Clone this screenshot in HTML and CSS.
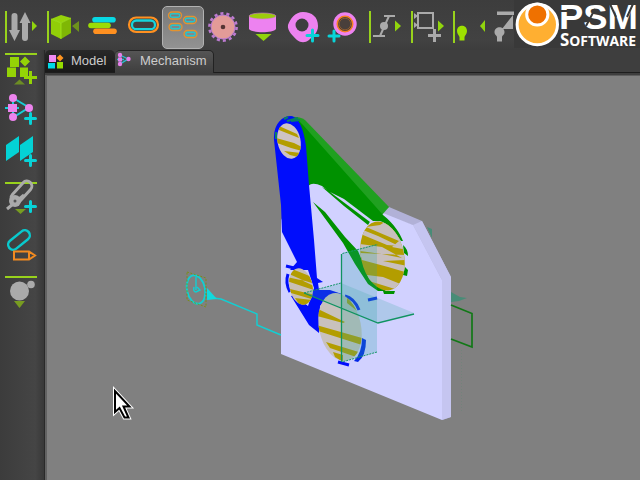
FILE: index.html
```html
<!DOCTYPE html>
<html lang="en">
<head>
<meta charset="utf-8">
<title>Mechanism</title>
<link rel="stylesheet" href="styles.css">
</head>
<body>
<div class="app">
  <header class="toolbar">
    <svg class="tool" width="43" height="48" viewBox="0 0 43 48"><path class="bar" d="M6 11v32"/><g class="grey-line"><path d="M14.500 16v16M25 21v17"/></g><path fill="#aaa" d="M9 30h11l-5.500 11zM19.500 23h11L25 12z"/><path class="lime" d="M32 21l5 5-5 5z"/></svg>
    <svg class="tool" width="41" height="48" viewBox="43 0 41 48"><path class="bar" d="M48 11v32"/><path fill="#96d30b" d="M51 19l10-4 10 3-10 5z"/><path fill="#91ce08" d="M51 19l10 4v16l-10-5z"/><path fill="#7fb705" d="M61 23l10-5v15l-10 6z"/><path fill="none" stroke="#a8ef20" stroke-width=".7" d="M51 19l10 4 10-5M61 23v16"/><path fill="#6d921c" d="M79 21v11l-7-6z"/></svg>
    <svg class="tool" width="40" height="48" viewBox="84 0 40 48"><g stroke-width="5.600" stroke-linecap="round"><path stroke="#08d9e4" d="M95 19.700h18"/><path stroke="#9bdc05" d="M91 25.500h17"/><path stroke="#ff9020" d="M96 31.200h18"/></g></svg>
    <svg class="tool" width="38" height="48" viewBox="124 0 38 48"><g fill="none"><rect x="129" y="17.500" width="29" height="14.500" rx="7.200" stroke="#ff9020" stroke-width="2.200"/><rect x="132" y="20.500" width="23" height="8.700" rx="4.300" stroke="#16d4dc" stroke-width="2.300"/></g></svg>
    <div class="pressed"><svg width="40" height="41" viewBox="163 7 40 41"><defs><g id="pill" fill="none"><rect x=".5" y=".5" width="13" height="7" rx="3.500" stroke="#e3922f" stroke-width="1.300"/><rect x="2.300" y="2.300" width="9.400" height="3.400" rx="1.700" stroke="#28c5cb" stroke-width="1.400"/></g></defs><use href="#pill" x="168" y="11.500"/><use href="#pill" x="183" y="16"/><use href="#pill" x="168.500" y="23"/><use href="#pill" x="183.500" y="30"/></svg></div>
    <svg class="tool" width="40" height="48" viewBox="204 0 40 48"><circle cx="223" cy="27" r="13.600" fill="none" stroke="#bd7bd2" stroke-width="2.600" stroke-dasharray="3.100 3"/><circle cx="223" cy="27" r="12" fill="#e39b98" stroke="#bd7bd2"/><circle cx="223" cy="27" r="2.300" fill="#553434"/></svg>
    <svg class="tool" width="40" height="48" viewBox="244 0 40 48"><path fill="#ed82f0" d="M249 16v13c3 4.300 24 4.300 27 0V16z"/><ellipse cx="262.500" cy="16" rx="13.500" ry="3" fill="#9bcb0b" stroke="#d27ad8" stroke-width=".6"/><path class="lime" d="M255.500 34h16l-8 7z"/></svg>
    <svg class="tool" width="41" height="48" viewBox="284 0 41 48"><path fill="#ed82f0" d="M288 25c2-6 7-13 15-13 9 0 15 5 15 14 0 7-5 10-9 14-4 3-8 3-12 0-4-4-10-9-9-15z"/><circle cx="302" cy="25" r="6.500" fill="#3e3e3e"/><path class="plus" d="M307 35.500h11M312.500 30v11"/></svg>
    <svg class="tool" width="39" height="48" viewBox="325 0 39 48"><circle cx="345" cy="24" r="11.700" fill="#ed82f0"/><circle cx="345" cy="24" r="7.700" fill="#493f3b" stroke="#f58020" stroke-width="1.600"/><circle cx="345" cy="24" r="5.800" fill="none" stroke="#9b602c" stroke-width=".8"/><path class="plus" d="M329 36h10M334 31v10"/></svg>
    <svg class="tool" width="43" height="48" viewBox="364 0 43 48"><path class="bar" d="M370 11v32"/><path fill="none" stroke="#aaa" stroke-width="2" d="M384 16h11M389 16l-9 20M373 36h12"/><circle cx="384" cy="26" r="4" fill="#aaa"/><path class="lime" d="M395 20.500l6 5.500-6 5.500z"/></svg>
    <svg class="tool" width="43" height="48" viewBox="407 0 43 48"><path class="bar" d="M412 11v32"/><path fill="none" stroke="#aaa" stroke-width="2" d="M418 13h15v15h-15z"/><path fill="#aaa" d="M414 13l4 3-4 3zM414 22l4 3-4 3z"/><path stroke="#aaa" stroke-width="3" d="M428 35.500h13M434.500 29v13"/><path class="lime" d="M438 20.500l6 5.500-6 5.500z"/></svg>
    <svg class="tool" width="35" height="48" viewBox="450 0 35 48"><path class="bar" d="M454 11v32"/><path fill="#9de000" d="M457 31c0-7 10-7 10 0 0 3-2 4-2.500 6v3.500h-5V37c-.5-2-2.500-3-2.500-6z"/><path class="lime" d="M485 20v12l-5-6z"/></svg>
    <svg class="tool" width="29" height="48" viewBox="485 0 29 48"><path fill="#aaa" d="M497 11.500h17V15h-17zM513 15v14h-11zM494.500 32c0-6.500 10-6.500 10 0 0 3-2 3-2.500 5v4.500h-5V37c-.5-2-2.500-2-2.500-5z"/></svg>
    <svg class="logo" width="126" height="48" viewBox="514 0 126 48"><circle cx="537.300" cy="24.500" r="20.200" fill="#ffaf31" stroke="#fff" stroke-width="3"/><circle cx="537.300" cy="14.500" r="10.600" fill="#ef7100" stroke="#fff" stroke-width="3"/><text class="brand" x="559" y="28.500" textLength="79" lengthAdjust="spacingAndGlyphs">PSM</text><path class="cuts" d="M559 11h9.500M595 9l-9 17M616 17l-6-13M627 17l6-13"/><text class="brand-sub" x="560" y="46" textLength="76" lengthAdjust="spacingAndGlyphs"><tspan class="initial">S</tspan>OFTWARE</text></svg>
  </header>
  <div class="body">
    <aside class="sidebar">
      <svg width="44" height="40" viewBox="0 50 44 40"><path class="bar" d="M5 54h32"/><path fill="#94d306" d="M10 57h9v10h-9zM25 56.500l5 5-5 5-5-5zM7 67.500h9V77H7zM20 67.500h8V77h-8z"/><path stroke="#94d306" stroke-width="3" d="M24 77.500h13M30.500 71v13"/><path fill="#6d8d24" d="M14 84.500l5.500-5 5.500 5z"/></svg>
      <svg width="44" height="40" viewBox="0 90 44 40"><path stroke="#16ced6" stroke-width="2" fill="none" d="M13 98l16 9.500-16 10zM5 108h14"/><g fill="#ec83ed"><circle cx="13" cy="98" r="4"/><circle cx="29" cy="108" r="4"/><circle cx="13" cy="117" r="4"/><path d="M8 104h9v8H8z"/></g><path class="plus" d="M25.500 118.500h10M30.500 113.500v10"/></svg>
      <svg width="44" height="45" viewBox="0 130 44 45"><path fill="#04d2d5" d="M6 145l13-9v16l-13 9zM20 145l13-9v16l-13 9z"/><path class="plus" d="M25.500 160.500h10M30.500 155.500v10"/></svg>
      <svg width="44" height="48" viewBox="0 175 44 48"><path class="bar" d="M5 183h32"/><g fill="none" stroke="#aaa"><rect x="8.500" y="187" width="26" height="10" rx="5" transform="rotate(-48 21.500 192)" stroke-width="3"/><path d="M7 209l17-14" stroke-width="3"/></g><circle cx="15" cy="201" r="6" fill="#aaa"/><circle cx="15" cy="201" r="1.500" fill="#555"/><path fill="#789c21" d="M15 209h11l-5.500 5z"/><path class="plus" d="M25.500 206.500h10M30.500 201.500v10"/></svg>
      <svg width="44" height="47" viewBox="0 223 44 47"><rect x="6.500" y="235" width="25" height="10" rx="5" transform="rotate(-39 19 240)" fill="none" stroke="#09c9cd" stroke-width="2.500"/><path fill="none" stroke="#f18a20" stroke-width="2" d="M14 251.500h15l6 4-6 4H14zM29 251v9"/></svg>
      <svg width="44" height="50" viewBox="0 270 44 50"><path class="bar" d="M5 277h32"/><circle cx="19.500" cy="291" r="9.500" fill="#aaa"/><circle cx="31" cy="284.500" r="3.800" fill="#aaa"/><path fill="#789c21" d="M14 301h11l-5.500 7z"/></svg>
    </aside>
    <main class="workspace">
      <nav class="tabs">
        <div class="tab tab-model"><svg width="22" height="22" viewBox="45 50 22 22"><path fill="#f08af2" d="M49 55h7v7h-7z"/><path fill="#ff9420" d="M60 54.500l3.500 3.500-3.500 3.500-3.500-3.500z"/><path fill="#00d9e8" d="M48 63h7v5.500h-7z"/><path fill="#96dc00" d="M57 62h6v6.500h-6z"/></svg><span>Model</span></div>
        <div class="tab tab-active"><svg width="20" height="22" viewBox="115 50 20 22"><path fill="none" stroke="#27bfd0" stroke-width="1.300" d="M120 55l8 4-8 5zM117 59.500h7"/><g fill="#e780eb"><circle cx="120" cy="55" r="2.200"/><circle cx="128.500" cy="59" r="2.200"/><circle cx="120" cy="64" r="2.200"/><path d="M118 57.500h4v4h-4z"/></g></svg><span>Mechanism</span></div>
      </nav>
      <section class="viewport">
        <svg width="593" height="404" viewBox="47 76 593 404">
          <defs>
            <clipPath id="pinTop"><ellipse cx="289" cy="141" rx="11.500" ry="18" transform="rotate(-12 289 141)"/></clipPath>
            <clipPath id="pinSmall"><ellipse cx="301" cy="286.500" rx="11.500" ry="18.500" transform="rotate(-12 301 286.500)"/></clipPath>
            <clipPath id="pinLarge"><ellipse cx="340" cy="327" rx="21" ry="34.500" transform="rotate(-12 340 327)"/></clipPath>
            <clipPath id="pinRight"><ellipse cx="382.500" cy="256" rx="21.500" ry="35" transform="rotate(-12 382.500 256)"/></clipPath>
          </defs>
          <!-- base plate -->
          <path fill="#b1b1d7" d="M380 213l9-6 33 14 29 56v140l-9 3-1-141-29-54z"/>
          <path fill="#c5c5f0" d="M413 225l9-4 29 56-9 3zM442 280l9-3v140l-9 3z"/>
          <path fill="#d1d1ff" d="M281 354V220l26-44 76 37 30 12 29 55v140z"/>
          <!-- green lever -->
          <path fill="#20a020" d="M289 117q10-1 16 3l84 87-7 8-85-89z"/>
          <path fill="#009100" d="M297 119l6 6 80 90c12 10 16 17 20 26h-2c-6-10-12-17-21-20h-8l-31-21q-10-6-19-14-11-5-14 1l-8-20z"/>
          <path fill="#009100" d="M322 187l8 4 41 29-3 5-24-19zM313 202L325 212L345 237L358 251L366 270L379 286L386 291L378 291L368 284L355 264L343 243zM383 291h12l-1 3h-10zM403 245q5 4 5 11l-4-3zM405 267l3 3-1 6-4-1z"/>
          <path fill="#d1d1ff" d="M330 192l14 7 29 22-3 1z"/>
          <!-- blue link -->
          <path fill="#000dfc" d="M274 140C273 124 282 116 291 116C299 117 304 130 306 146L309 185L314 240L317 278L323 282L318 283L319 290L330 290L342 294Q328 296 320 306L319 333L309 325L291 296L294 295L308 306L314 288L308 270L290 270L297 262L282 232L281 205z"/>
          <path fill="none" stroke="#000dfc" stroke-width="3" d="M288 274q-3 9 2 18M286 266l8 2M345 296q9 2 14 14M368 300l9-2M338 362l11 3"/>
          <path fill="#0528e8" d="M362 338l4 2q0 16-8 22l-4-1q8-8 8-23z"/>
          <path fill="none" stroke="#087f65" stroke-width="2" d="M284 119l4-2M291 121l9-1M287 121l11-3M276 132v7"/>
          <!-- pins -->
          <g clip-path="url(#pinTop)"><path fill="#cdc3c5" d="M270 115h40v50h-40z"/><path class="stripe" d="M279 126l18 8 2 4-20-8zM276 138l18 5 12 6v3l-15-4-14-5zM284 151l18 2v5l-12-3z"/></g>
          <g clip-path="url(#pinSmall)"><path fill="#c8bfb4" d="M285 265h35v45h-35z"/><path class="stripe" d="M287 267l25 10v6l-13-4 15 7v4l-27-9v-4l18 4-18-8zM290 289l25 6v5l-24-7zM295 298l17 2-3 7-10-3z"/></g>
          <g clip-path="url(#pinLarge)"><path fill="#c8c1bd" d="M315 290h50v75h-50z"/><path class="stripe" d="M318 309l27 13-2 1-26-7zM316 325l46 13v7l-47-15zM326 342l36 11v6l-32-11zM333 352l10 3v7l-8-5zM347 293l18 17v7l-18-14z"/></g>
          <g clip-path="url(#pinRight)"><path fill="#b39d00" d="M357 220h50v75h-50z"/><path fill="#c8bfbd" d="M388 220l19 9v21l-15-3 7-6-33-14 14-2zM363 230l15 6 21 10-12-1-24-10zM360 244l22 3 20 11-20-4-22-3zM362 260l26 7 20 6v-7l-25-5 22-1v-5l-45-2zM367 275l16 2 20 8-8 4-26-8z"/></g>
          <!-- reference planes -->
          <path fill="#26a5a5" fill-opacity=".24" d="M342 253l35-9v108l-35 10z"/>
          <path fill="#35a99f" fill-opacity=".22" d="M304 293l37-10 73 30-36 10z"/>
          <path fill="none" stroke="#159568" stroke-width="1" stroke-dasharray="2 1" d="M342.500 253.500l35-9M377 352l-35 10M304 293l37-10"/>
          <path fill="none" stroke="#0f9361" stroke-width="1.300" d="M341.500 254v108M304 293l74 30 36-9"/>
          <path fill="none" stroke="#127817" stroke-width="1.700" d="M451 305l21 8.500V347l-21-8"/>
          <path fill="#488c77" d="M451 292l9 5 7 1-8 3-8 1zM427 227l5 2v9z"/>
          <path stroke="#73827b" stroke-dasharray="1 2" d="M461.500 350v63"/>
          <!-- motor -->
          <g fill="none" stroke="#11cfd3" stroke-width="1.400"><ellipse cx="196" cy="289.500" rx="9" ry="14.500" transform="rotate(-12 196 289.500)" stroke-width="1.900"/><path d="M196 277v13M194 287q-1 5 2 5l4-2-3-3M213 298l8 1 36 15v11l24 10"/></g>
          <path fill="none" stroke="#779000" stroke-width=".8" stroke-dasharray="2 1.500" d="M187 272l19 6v29l-19-7z"/>
          <path fill="#11dadd" d="M207 288l10 11-10 1z"/>
          <path class="pointer-halo" d="M115 391v21l4.500-4 5 9.500h4l-5-11h6z"/>
          <path class="pointer" d="M115 391v21l4.500-4 5 9.500h4l-5-11h6z"/>
        </svg>
      </section>
    </main>
  </div>
</div>
</body>
</html>
```
FILE: styles.css
```css
* { box-sizing: border-box; }
body { margin: 0; background: #3e3e3e; font-family: "Liberation Sans", sans-serif; }
svg { display: block; flex: none; }
.app { width: 640px; height: 480px; overflow: hidden; display: flex; flex-direction: column; }
.toolbar { display: flex; height: 50px; background: linear-gradient(#3d3d3d, #424242 80%, #3d3d3d); }
.pressed { width: 42px; height: 43px; margin-top: 6px; display: flex; justify-content: center; overflow: hidden; background: linear-gradient(#777, #888 60%, #929292); border: 1px solid #b2b2b2; border-radius: 5px; }
.body { display: flex; flex: 1; min-height: 0; }
.sidebar { width: 44px; display: flex; flex-direction: column; background: linear-gradient(90deg, #3c3c3c, #454545 80%, #383838); }
.workspace { flex: 1; display: flex; flex-direction: column; border-left: 1px solid #292929; }
.tabs { height: 23px; display: flex; border-bottom: 1px solid #1d1d1d; }
.tab { display: flex; height: 22px; color: #ccc; font-size: 13px; line-height: 22px; border-radius: 5px 5px 0 0; }
.tab-model { width: 70px; background: linear-gradient(#292929, #191919); }
.tab-model span { margin-left: 4px; }
.tab-active { width: 99px; height: 23px; background: linear-gradient(#555, #3e3e3e); border-top: 1px solid #252525; border-right: 1px solid #222; }
.tab-active svg { margin-top: -1px; }
.tab-active span { margin-left: 5px; line-height: 20px; }
.viewport { flex: 1; margin-top: 2px; border-left: 2px solid #626262; border-top: 1px solid #5d5d5d; background: #808080; overflow: hidden; }
.bar { fill: none; stroke: #98d21c; stroke-width: 2; }
.lime { fill: #91d50d; }
.plus { fill: none; stroke: #08d3d8; stroke-width: 3; stroke-linecap: round; }
.grey-line { stroke: #aaa; stroke-width: 6; stroke-linecap: round; }
.stripe { fill: #b39d00; }
.logo { background: #393939; overflow: visible; }
.brand { font: bold 35px "Liberation Sans", sans-serif; fill: #fff; }
.brand-sub { font: bold 14px "Open Sans", sans-serif; fill: #fff; }
.initial { font-size: 17px; }
.cuts { fill: none; stroke: #393939; stroke-width: 2; }
.pointer { fill: #fff; stroke: #000; stroke-width: 2; }
.pointer-halo { fill: #fff; stroke: #fff; stroke-width: 4; }
```
